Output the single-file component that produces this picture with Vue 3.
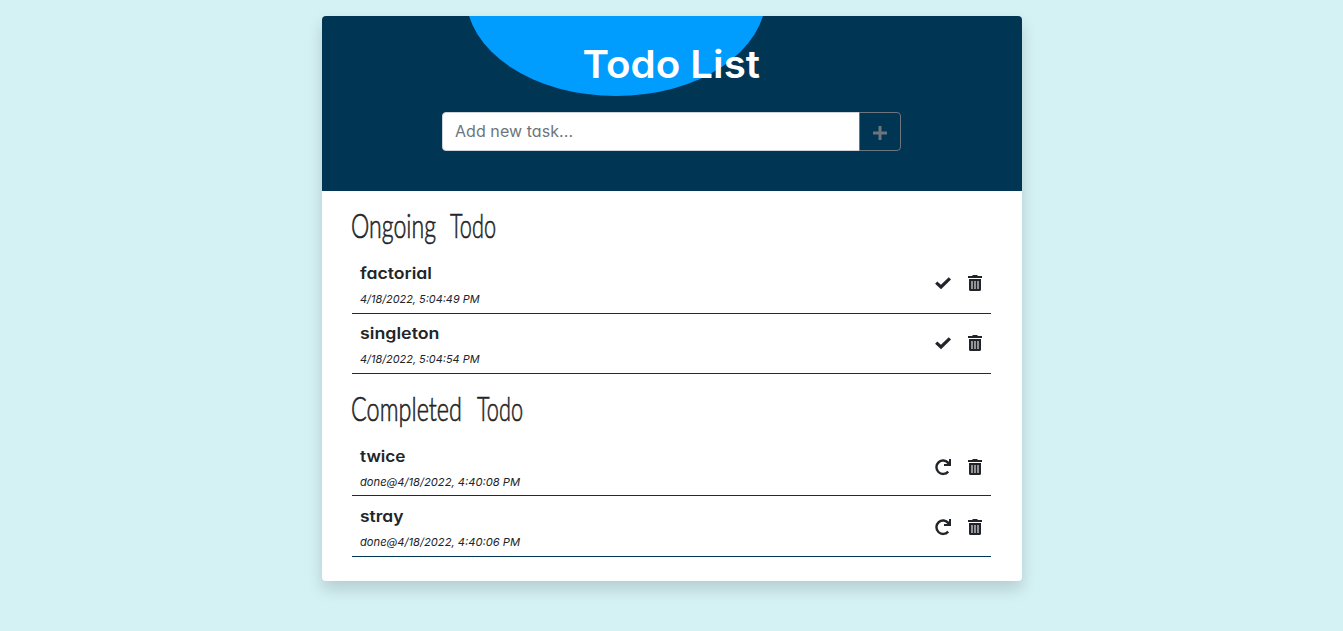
<script setup>
import { ref } from 'vue'

const task = ref('')
const sections = [
  {
    key: 'ongoing',
    words: [
      { text: 'Ongoing', x: -1, width: 85, scale: 0.78 },
      { text: 'Todo', x: 98, width: 46, scale: 0.66 },
    ],
    items: [
      { name: 'factorial', width: 72, date: '4/18/2022, 5:04:49 PM', dateWidth: 119.5 },
      { name: 'singleton', width: 79.5, date: '4/18/2022, 5:04:54 PM', dateWidth: 119.5 },
    ],
  },
  {
    key: 'completed',
    words: [
      { text: 'Completed', x: -1, width: 111, scale: 0.8 },
      { text: 'Todo', x: 125, width: 46, scale: 0.66 },
    ],
    items: [
      { name: 'twice', width: 45.5, date: 'done@4/18/2022, 4:40:08 PM', dateWidth: 160 },
      { name: 'stray', width: 43.5, date: 'done@4/18/2022, 4:40:06 PM', dateWidth: 160 },
    ],
  },
]
</script>

<template>
  <main class="card">
    <header class="header">
      <div class="blob"></div>
      <h1 class="title">
        <svg width="178" height="48"><text x="-0.5" y="37" textLength="177.5" lengthAdjust="spacingAndGlyphs">Todo List</text></svg>
      </h1>
      <form class="add" @submit.prevent>
        <input v-model="task" class="field" placeholder="Add new task..." />
        <button class="plus" type="button" aria-label="Add">
          <svg width="14" height="14" viewBox="0 0 14 14"><path d="M7 0v14M0 7h14" stroke="currentColor" stroke-width="3" /></svg>
        </button>
      </form>
    </header>
    <section v-for="s in sections" :key="s.key" class="section" :class="s.key">
      <h2 class="heading">
        <svg width="200" height="50">
          <text
            v-for="w in s.words"
            :key="w.text"
            :transform="`translate(${w.x} 34) scale(${w.scale} 1.06)`"
            :textLength="w.width / w.scale"
            lengthAdjust="spacingAndGlyphs"
          >{{ w.text }}</text>
        </svg>
      </h2>
      <div v-for="i in s.items" :key="i.name" class="row">
        <div class="info">
          <svg class="name" width="200" height="24"><text x="0" y="17" :textLength="i.width" lengthAdjust="spacingAndGlyphs">{{ i.name }}</text></svg>
          <svg class="date" width="200" height="18"><text x="0" y="13" :textLength="i.dateWidth" lengthAdjust="spacingAndGlyphs">{{ i.date }}</text></svg>
        </div>
        <div class="actions">
          <svg v-if="s.key === 'ongoing'" width="16" height="16" viewBox="0 0 16 16">
            <path d="M1.2 7.6 6 12 14.9 3.4" fill="none" stroke="currentColor" stroke-width="3.2" />
          </svg>
          <svg v-else width="16" height="16" viewBox="0 0 16 16">
            <path d="M13.2 12.6A6.7 6.7 0 1 1 13.4 4.1" fill="none" stroke="currentColor" stroke-width="2.4" />
            <path d="M16 0v7H9V4.9h2.5L14 2.2V0z" fill="currentColor" />
          </svg>
          <svg width="14" height="16" viewBox="0 0 14 16">
            <path d="M0 1h4l1-1h4l1 1h4v2H0zM1 4h12v10.5Q13 16 11.5 16h-9Q1 16 1 14.5z" fill="currentColor" />
            <path d="M3 6h2v8H3zM6 6h2v8H6zM9 6h2v8H9z" fill="#929497" />
          </svg>
        </div>
      </div>
    </section>
  </main>
</template>

<style>
html {
  background: #d4f1f4;
}
body {
  min-height: 100vh;
}
</style>

<style scoped>
.card {
  box-sizing: border-box;
  width: 700px;
  height: 565px;
  margin: 16px 321px 0 322px;
  background: #fff;
  border-radius: 4px;
  box-shadow: 0 8px 16px rgba(0, 0, 0, 0.15);
  color: #212529;
  font-family: Inter, "Open Sans", sans-serif;
  font-feature-settings: "cv11";
}
.header {
  position: relative;
  overflow: hidden;
  box-sizing: border-box;
  height: 175px;
  padding-top: 25px;
  background: #003554;
  border-radius: 4px 4px 0 0;
}
.blob {
  position: absolute;
  left: 144px;
  top: -120px;
  width: 300px;
  height: 200px;
  border-radius: 50%;
  background: #009dff;
}
.title {
  position: relative;
  margin: 0 0 0 261px;
  height: 48px;
  color: #fff;
  font-size: 38.5px;
  font-weight: 600;
}
svg {
  display: block;
  overflow: visible;
}
text {
  fill: currentColor;
}
.add {
  position: relative;
  display: flex;
  width: 459px;
  height: 39px;
  margin: 23px 0 0 120px;
}
.field {
  box-sizing: border-box;
  width: 418px;
  padding: 0 12px 2px;
  border: 1px solid #ced4da;
  border-radius: 4px 0 0 4px;
  outline: none;
  background: #fff;
  font: 16px Inter, sans-serif;
  font-feature-settings: "cv11";
  letter-spacing: 0.06px;
}
.field::placeholder {
  color: #6c757d;
  opacity: 1;
}
.plus {
  display: grid;
  place-items: center;
  box-sizing: border-box;
  width: 42px;
  margin-left: -1px;
  padding: 3px 0 0;
  border: 1px solid #6c757d;
  border-radius: 0 4px 4px 0;
  background: transparent;
  color: #6c757d;
}
.section {
  padding: 13px 31px 0 30px;
}
.heading {
  height: 50px;
  margin: 0;
  font-family: Lato, sans-serif;
  font-size: 31px;
  font-weight: 300;
}
.heading text {
  stroke: currentColor;
  stroke-width: 0.6px;
}
.row {
  display: flex;
  justify-content: space-between;
  box-sizing: border-box;
  height: 60px;
  padding: 8px 9px 0 8px;
  border-bottom: 1px solid #003554;
}
.completed {
  padding-top: 13px;
}
.completed .heading {
  height: 49px;
}
.completed .row {
  padding-top: 9px;
}
.completed .row:last-child {
  height: 61px;
}
.name {
  font-size: 16px;
  font-weight: 600;
}
.date {
  margin-top: 4px;
  font-size: 11px;
  font-style: italic;
}
.actions {
  display: flex;
  gap: 17px;
  padding-top: 13px;
}
.completed .actions {
  padding-top: 14px;
}
</style>
